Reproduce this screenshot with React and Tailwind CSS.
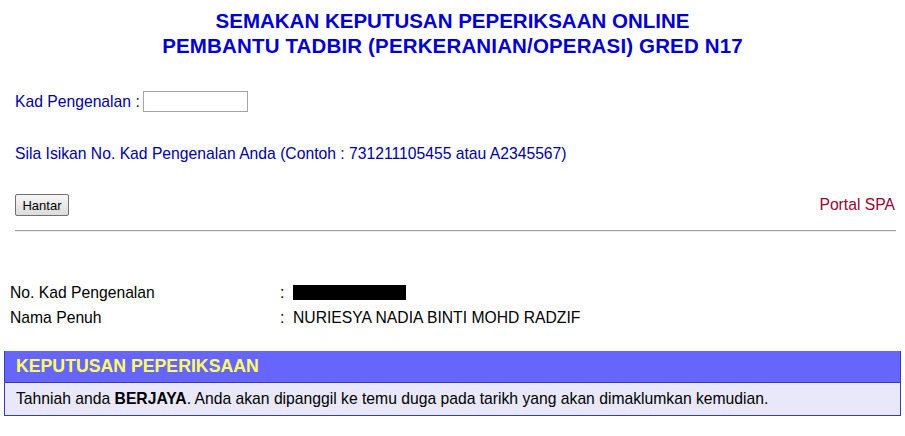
import { useState } from 'react';

const font = "font-['Liberation_Sans',Arial,sans-serif]";

const App = () => {
  const [ic, setIc] = useState('');

  return (
    <div className={`${font} bg-white w-[905px] h-[436px] overflow-hidden text-[15.7px]`}>
      {/* Title */}
      <div className="pt-[8px] text-center font-bold text-[20.5px] leading-[25px] text-[#0000cc]">
        <div>SEMAKAN KEPUTUSAN PEPERIKSAAN ONLINE</div>
        <div className="tracking-[0.15px]">PEMBANTU TADBIR (PERKERANIAN/OPERASI) GRED N17</div>
      </div>

      {/* Form */}
      <div className="mt-[33px] pl-[15px] flex items-center h-[21px] text-[#000099]">
        <span>Kad Pengenalan :</span>
        <input
          value={ic}
          onChange={(e) => setIc(e.target.value)}
          className="ml-[3px] w-[105px] h-[21px] border border-[#a5a5a5] bg-white px-1 text-[13px] outline-none"
        />
      </div>

      <div className="mt-[32px] pl-[15px] leading-[20px] text-[#000099]">
        Sila Isikan No. Kad Pengenalan Anda (Contoh : 731211105455 atau A2345567)
      </div>

      <div className="mt-[30px] pl-[15px] pr-[10px] flex items-center justify-between h-[22px]">
        <button className="h-[22px] w-[54px] border border-[#707070] rounded-[2px] bg-gradient-to-b from-[#f6f6f6] to-[#dcdcdc] text-[13px] text-black leading-none">
          Hantar
        </button>
        <a className="text-[#990033] leading-[20px]">Portal SPA</a>
      </div>

      <div className="mt-[14px] ml-[15px] mr-[9px] h-[2px] border-t border-[#a0a0a0] border-b border-b-[#eeeeee]"></div>

      {/* Result details */}
      <div className="mt-[48px] pl-[10px] text-black leading-[25px]">
        <div className="flex">
          <span className="w-[270px]">No. Kad Pengenalan</span>
          <span className="w-[13px]">:</span>
          <span className="flex items-center">
            <span className="inline-block w-[113px] h-[15px] bg-black"></span>
          </span>
        </div>
        <div className="flex">
          <span className="w-[270px]">Nama Penuh</span>
          <span className="w-[13px]">:</span>
          <span>NURIESYA NADIA BINTI MOHD RADZIF</span>
        </div>
      </div>

      {/* Result table */}
      <div className="mt-[21px] mx-[4px] border-x border-b border-[#3c3ca8]">
        <div className="h-[32px] bg-[#6666ff] border-b border-[#3c3ca8] pl-[11px] flex items-center">
          <span className="font-bold text-[17.7px] text-[#ffff66]">KEPUTUSAN PEPERIKSAAN</span>
        </div>
        <div className="h-[32px] bg-[#e8e8fa] pl-[11px] flex items-center text-black">
          <span>
            Tahniah anda <b>BERJAYA</b>. Anda akan dipanggil ke temu duga pada tarikh yang akan dimaklumkan kemudian.
          </span>
        </div>
      </div>
    </div>
  );
};

export default App;
